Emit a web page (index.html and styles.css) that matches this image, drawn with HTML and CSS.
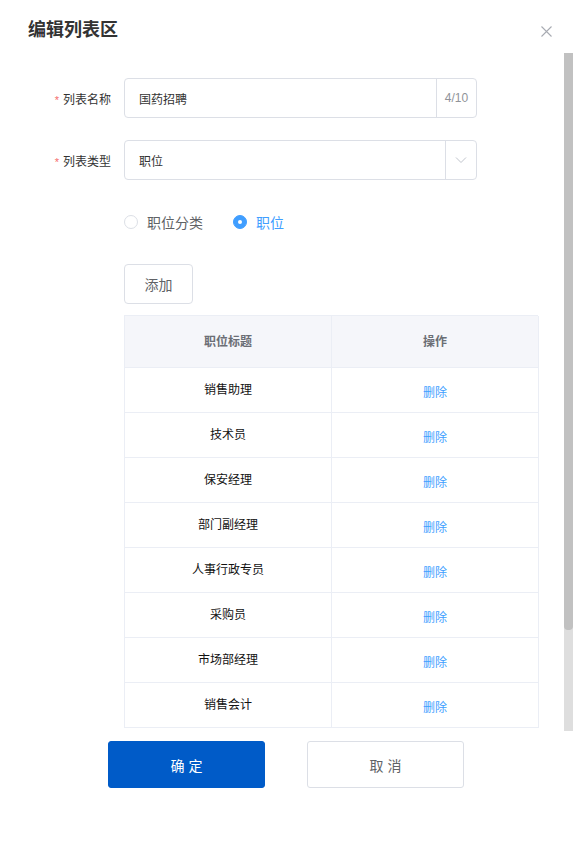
FILE: index.html
```html
<!DOCTYPE html>
<html lang="zh-CN">
<head>
<meta charset="utf-8">
<title>编辑列表区</title>
<link rel="stylesheet" href="styles.css">
</head>
<body>
<div class="dialog">
  <div class="header">
    <div class="title">编辑列表区</div>
    <svg class="close" width="11" height="11" viewBox="0 0 11 11"><path d="M0.5 0.5L10.5 10.5M10.5 0.5L0.5 10.5" stroke="#a8abb2" stroke-width="1.1" fill="none"/></svg>
  </div>
  <div class="body">
    <div class="content">
      <div class="form-item">
        <label class="label"><span class="req">*</span>列表名称</label>
        <div class="control input">
          <span class="value">国药招聘</span>
          <span class="counter">4/10</span>
        </div>
      </div>
      <div class="form-item item-select">
        <label class="label"><span class="req">*</span>列表类型</label>
        <div class="control input">
          <span class="value">职位</span>
          <span class="arrow"><svg width="12" height="8" viewBox="0 0 12 8"><path d="M1 1.5L6 6.5L11 1.5" stroke="#c0c4cc" stroke-width="1" fill="none"/></svg></span>
        </div>
      </div>
      <div class="radios">
        <span class="radio"><span class="dot"></span><span>职位分类</span></span>
        <span class="radio checked"><span class="dot"></span><span>职位</span></span>
      </div>
      <div class="add-row"><button class="btn-add">添加</button></div>
      <div class="table">
        <div class="tr th"><div class="td">职位标题</div><div class="td">操作</div></div>
        <div class="tr"><div class="td">销售助理</div><div class="td"><a class="del">删除</a></div></div>
        <div class="tr"><div class="td">技术员</div><div class="td"><a class="del">删除</a></div></div>
        <div class="tr"><div class="td">保安经理</div><div class="td"><a class="del">删除</a></div></div>
        <div class="tr"><div class="td">部门副经理</div><div class="td"><a class="del">删除</a></div></div>
        <div class="tr"><div class="td">人事行政专员</div><div class="td"><a class="del">删除</a></div></div>
        <div class="tr"><div class="td">采购员</div><div class="td"><a class="del">删除</a></div></div>
        <div class="tr"><div class="td">市场部经理</div><div class="td"><a class="del">删除</a></div></div>
        <div class="tr"><div class="td">销售会计</div><div class="td"><a class="del">删除</a></div></div>
      </div>
    </div>
    <div class="scrollbar"><div class="thumb"></div></div>
  </div>
  <div class="footer">
    <button class="btn btn-primary">确 定</button>
    <button class="btn btn-default">取 消</button>
  </div>
</div>
</body>
</html>
```
FILE: styles.css
```css
* { box-sizing: border-box; }
html, body { margin: 0; padding: 0; background: #fff; }
body {
  font-family: "Liberation Sans", "Noto Sans CJK SC", sans-serif;
  color: #333;
}
.dialog { width: 573px; height: 842px; background: #fff; }
.header {
  height: 53px;
  padding: 18px 21px 0 28px;
  display: flex;
  justify-content: space-between;
  align-items: flex-start;
}
.title {
  font-size: 18px;
  line-height: 24px;
  font-weight: bold;
  color: #333;
}
.close { margin-top: 8px; }
.body {
  position: relative;
  height: 678px;
  overflow: hidden;
}
.content { padding: 25px 0 0 0; width: 564px; }
.form-item { display: flex; align-items: center; height: 40px; }
.item-select { margin-top: 22px; }
.label {
  width: 112px;
  text-align: right;
  font-size: 12px;
  color: #333;
  padding-right: 1px;
}
.req { color: #f56c6c; margin-right: 4px; font-size: 11px; }
.control { margin-left: 12px; }
.input {
  width: 353px;
  height: 40px;
  border: 1px solid #dcdfe6;
  border-radius: 4px;
  display: flex;
  align-items: stretch;
  font-size: 12px;
  color: #333;
}
.value { flex: 1; display: flex; align-items: center; padding-left: 14px; }
.counter {
  width: 40px;
  border-left: 1px solid #dcdfe6;
  display: flex; align-items: center; justify-content: center;
  color: #909399;
  font-size: 12px;
}
.arrow {
  width: 31px;
  border-left: 1px solid #dcdfe6;
  display: flex; align-items: center; justify-content: center;
}
.radios {
  margin: 32px 0 0 124px;
  height: 20px;
  display: flex;
  align-items: center;
  gap: 30px;
  font-size: 14px;
  color: #606266;
}
.radio { display: flex; align-items: center; gap: 9px; }
.dot {
  width: 14px; height: 14px;
  border: 1px solid #dcdfe6;
  border-radius: 50%;
  background: #fff;
  display: inline-block;
  position: relative;
}
.radio.checked { color: #409eff; }
.radio.checked .dot { background: #409eff; border-color: #409eff; }
.radio.checked .dot::after {
  content: "";
  position: absolute;
  left: 4px; top: 4px;
  width: 4px; height: 4px;
  border-radius: 50%;
  background: #fff;
}
.add-row { margin: 32px 0 0 124px; }
.btn-add {
  width: 69px; height: 40px;
  border: 1px solid #dcdfe6;
  border-radius: 4px;
  background: #fff;
  font-family: inherit;
  font-size: 14px;
  color: #606266;
  padding: 0;
}
.table {
  margin: 11px 0 0 124px;
  width: 414px;
  border-top: 1px solid #ebeef5;
  border-left: 1px solid #ebeef5;
}
.tr { display: grid; grid-template-columns: 207px 207px; height: 45px; }
.tr.th { height: 52px; background: #f5f6fa; }
.td {
  border-right: 1px solid #ebeef5;
  border-bottom: 1px solid #ebeef5;
  display: flex; align-items: center; justify-content: center;
  font-size: 12px;
  color: #111;
  padding-bottom: 3px;
}
.th .td { color: #6b6e75; font-weight: bold; padding-bottom: 2px; }
.del { color: #409eff; padding-top: 5px; }
.scrollbar {
  position: absolute;
  right: 0; top: 0;
  width: 9px; height: 678px;
  background: #dedede;
}
.thumb {
  height: 577px;
  background: #c1c1c1;
  border-radius: 0 0 4px 4px;
}
.footer {
  padding: 10px 0 0 108px;
  display: flex;
  gap: 42px;
}
.btn {
  width: 157px;
  height: 47px;
  border-radius: 3px;
  font-family: inherit;
  font-size: 14px;
  padding: 0;
}
.btn-primary { background: #005bc8; border: 1px solid #005bc8; color: #fff; }
.btn-default { background: #fff; border: 1px solid #dcdfe6; color: #606266; }
```
